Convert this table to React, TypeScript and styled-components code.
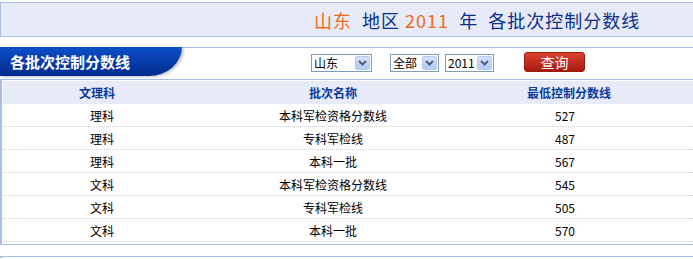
import React from "react";
import styled, { createGlobalStyle } from "styled-components";

const GlobalStyle = createGlobalStyle`
  html, body {
    margin: 0;
    padding: 0;
    background: #fff;
    overflow: hidden;
  }
  body {
    font-family: "Noto Sans CJK SC", "DejaVu Sans", sans-serif;
    font-size: 12px;
    color: #000;
  }
`;

const Page = styled.div`
  width: 693px;
  display: flex;
  flex-direction: column;
  padding-top: 2px;
`;

const Banner = styled.div`
  height: 33px;
  border: 1px solid #a9bde6;
  border-right: none;
  background: #e6ebf7;
  display: flex;
  align-items: center;
  padding-left: 313px;
  font-size: 18px;
  color: #0c2f8c;
  white-space: pre;
  letter-spacing: 1px;
`;

const Hot = styled.span`
  color: #f26a10;
`;

const Panel = styled.div`
  margin-top: 10px;
  display: flex;
  flex-direction: column;
`;

const PanelHead = styled.div`
  height: 31px;
  border-top: 1px solid #a9bde6;
  display: flex;
  align-items: flex-start;
`;

const Tab = styled.div`
  width: 172px;
  height: 29px;
  margin-top: -1px;
  padding-left: 10px;
  background: linear-gradient(#0c4fc8, #012a8e);
  border-bottom-right-radius: 34px 30px;
  box-shadow: 2px 1px 3px rgba(0, 0, 0, 0.25);
  color: #fff;
  font-size: 15px;
  font-weight: bold;
  line-height: 29px;
`;

const Filters = styled.div`
  display: flex;
  align-items: center;
  margin-left: 129px;
  margin-top: 5px;
`;

const SelectBox = styled.div<{ $w: number; $gap: number }>`
  width: ${(p) => p.$w}px;
  height: 18px;
  box-sizing: border-box;
  border: 1px solid #7f9db9;
  background: #fff;
  display: flex;
  align-items: center;
  justify-content: space-between;
  margin-right: ${(p) => p.$gap}px;
  padding: 0 1px 0 2px;
  font-size: 12px;
  color: #000;
`;

const Arrow = styled.span`
  width: 15px;
  height: 14px;
  box-sizing: border-box;
  border: 1px solid #b6c9f2;
  border-radius: 2px;
  background: linear-gradient(#d6e2fd, #b4c8f6);
  display: flex;
  align-items: center;
  justify-content: center;
`;

const QueryButton = styled.button`
  width: 61px;
  height: 20px;
  margin-top: -1px;
  border: 1px solid #9c1a10;
  border-radius: 3px;
  background: linear-gradient(#d8432f, #a91b10);
  color: #fff;
  font-family: inherit;
  font-size: 14px;
  padding: 0;
  line-height: 18px;
`;

const PanelBody = styled.div`
  border-top: 1px solid #a9bde6;
  border-bottom: 1px solid #a9bde6;
  border-left: 2px solid #a9bde6;
  padding: 1px 0 2px 1px;
`;

const Row = styled.div<{ $head?: boolean }>`
  display: grid;
  grid-template-columns: 188px 284px 188px 1fr;
  height: ${(p) => (p.$head ? 23 : 22)}px;
  align-items: center;
  background: ${(p) => (p.$head ? "#e6ebf7" : "#fff")};
  border-bottom: ${(p) => (p.$head ? "none" : "1px dotted #cfcfcf")};
  color: ${(p) => (p.$head ? "#0b3aa0" : "#000")};
  font-weight: ${(p) => (p.$head ? "bold" : "normal")};
  font-size: 12px;
`;

const Cell = styled.div<{ $shift?: number }>`
  text-align: center;
  padding-left: ${(p) => Math.max(p.$shift ?? 0, 0)}px;
  padding-right: ${(p) => Math.max(-(p.$shift ?? 0), 0)}px;
`;

const NextPanel = styled.div`
  margin-top: 11px;
  height: 1px;
  border-top: 1px solid #a9bde6;
  border-left: 2px solid #a9bde6;
`;

const Chevron = () => (
  <svg width="9" height="6" viewBox="0 0 9 6">
    <path d="M1 1 L4.5 4.5 L8 1" fill="none" stroke="#4a5f86" strokeWidth="2" />
  </svg>
);

const rows = [
  ["理科", "本科军检资格分数线", "527"],
  ["理科", "专科军检线", "487"],
  ["理科", "本科一批", "567"],
  ["文科", "本科军检资格分数线", "545"],
  ["文科", "专科军检线", "505"],
  ["文科", "本科一批", "570"],
];

export default function App() {
  return (
    <>
      <GlobalStyle />
      <Page>
        <Banner>
          <Hot>山东</Hot>{"  地区 "}<Hot>2011</Hot>{"  年  各批次控制分数线"}
        </Banner>
        <Panel>
          <PanelHead>
            <Tab>各批次控制分数线</Tab>
            <Filters>
              <SelectBox $w={61} $gap={18}>
                <span>山东</span>
                <Arrow><Chevron /></Arrow>
              </SelectBox>
              <SelectBox $w={49} $gap={6}>
                <span>全部</span>
                <Arrow><Chevron /></Arrow>
              </SelectBox>
              <SelectBox $w={49} $gap={30}>
                <span>2011</span>
                <Arrow><Chevron /></Arrow>
              </SelectBox>
              <QueryButton>查询</QueryButton>
            </Filters>
          </PanelHead>
          <PanelBody>
            <Row $head>
              <Cell>文理科</Cell>
              <Cell>批次名称</Cell>
              <Cell>最低控制分数线</Cell>
            </Row>
            {rows.map((r, i) => (
              <Row key={i}>
                <Cell $shift={10}>{r[0]}</Cell>
                <Cell>{r[1]}</Cell>
                <Cell $shift={-8}>{r[2]}</Cell>
              </Row>
            ))}
          </PanelBody>
        </Panel>
        <NextPanel />
      </Page>
    </>
  );
}
